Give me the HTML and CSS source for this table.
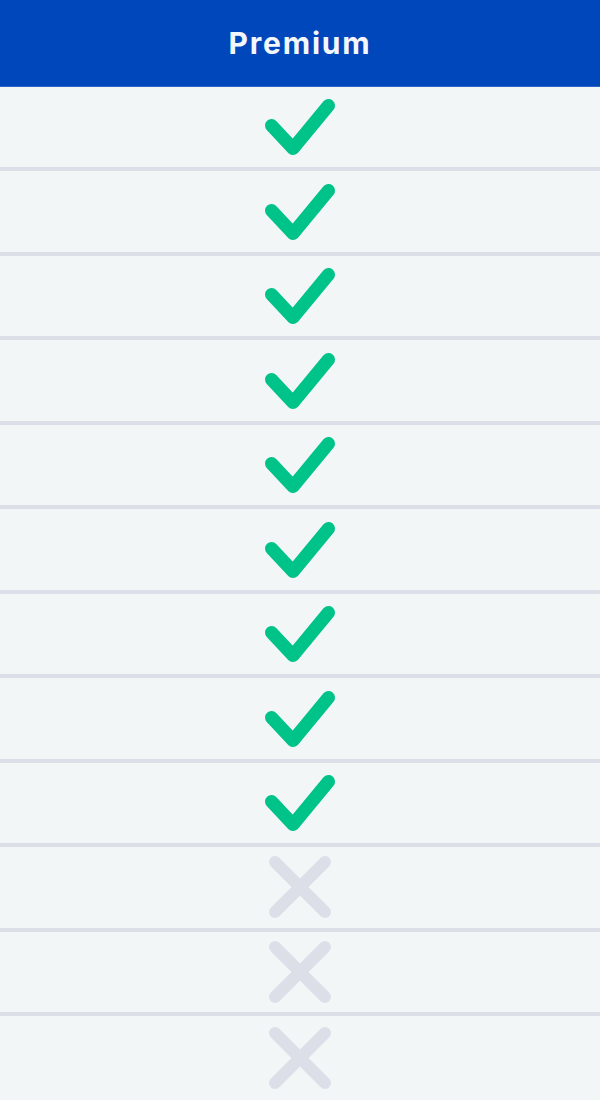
FILE: index.html
```html
<!DOCTYPE html>
<html>
<head>
<meta charset="utf-8">
<link rel="stylesheet" href="styles.css">
</head>
<body>
<div class="table">
  <div class="head">Premium</div>
  <div class="row"><svg class="check" viewBox="0 0 70 57"><path d="M6.5 26.5 L28 49.5 L63.5 6.5"/></svg></div>
  <div class="row"><svg class="check" viewBox="0 0 70 57"><path d="M6.5 26.5 L28 49.5 L63.5 6.5"/></svg></div>
  <div class="row"><svg class="check" viewBox="0 0 70 57"><path d="M6.5 26.5 L28 49.5 L63.5 6.5"/></svg></div>
  <div class="row"><svg class="check" viewBox="0 0 70 57"><path d="M6.5 26.5 L28 49.5 L63.5 6.5"/></svg></div>
  <div class="row"><svg class="check" viewBox="0 0 70 57"><path d="M6.5 26.5 L28 49.5 L63.5 6.5"/></svg></div>
  <div class="row"><svg class="check" viewBox="0 0 70 57"><path d="M6.5 26.5 L28 49.5 L63.5 6.5"/></svg></div>
  <div class="row"><svg class="check" viewBox="0 0 70 57"><path d="M6.5 26.5 L28 49.5 L63.5 6.5"/></svg></div>
  <div class="row"><svg class="check" viewBox="0 0 70 57"><path d="M6.5 26.5 L28 49.5 L63.5 6.5"/></svg></div>
  <div class="row"><svg class="check" viewBox="0 0 70 57"><path d="M6.5 26.5 L28 49.5 L63.5 6.5"/></svg></div>
  <div class="row"><svg class="cross" viewBox="0 0 64 64"><path d="M7 7 L57 57 M57 7 L7 57"/></svg></div>
  <div class="row"><svg class="cross" viewBox="0 0 64 64"><path d="M7 7 L57 57 M57 7 L7 57"/></svg></div>
  <div class="row last"><svg class="cross" viewBox="0 0 64 64"><path d="M7 7 L57 57 M57 7 L7 57"/></svg></div>
</div>
</body>
</html>
```
FILE: styles.css
```css
html, body {
  margin: 0;
  padding: 0;
  background: #f2f6f7;
}
.table {
  display: flex;
  flex-direction: column;
  width: 600px;
}
.head {
  height: 86.5px;
  background: #0047bb;
  color: #f4f7fb;
  display: flex;
  align-items: center;
  justify-content: center;
  font-family: "Inter", "Noto Sans", sans-serif;
  font-weight: 700;
  font-size: 30px;
  letter-spacing: 1.8px;
  border-bottom: 1px solid #2a62c8;
  box-sizing: border-box;
}
.row {
  height: 84.5px;
  box-sizing: border-box;
  border-bottom: 4px solid #dcdfe8;
  display: flex;
  align-items: center;
  justify-content: center;
}
.row.last {
  border-bottom: none;
}
.check {
  width: 70px;
  height: 57px;
  overflow: visible;
  margin-top: 2px;
  fill: none;
  stroke: #00c389;
  stroke-width: 13;
  stroke-linecap: round;
  stroke-linejoin: round;
}
.cross {
  width: 64px;
  height: 64px;
  overflow: visible;
  fill: none;
  stroke: #dcdfe8;
  stroke-width: 12;
  stroke-linecap: round;
}
```
